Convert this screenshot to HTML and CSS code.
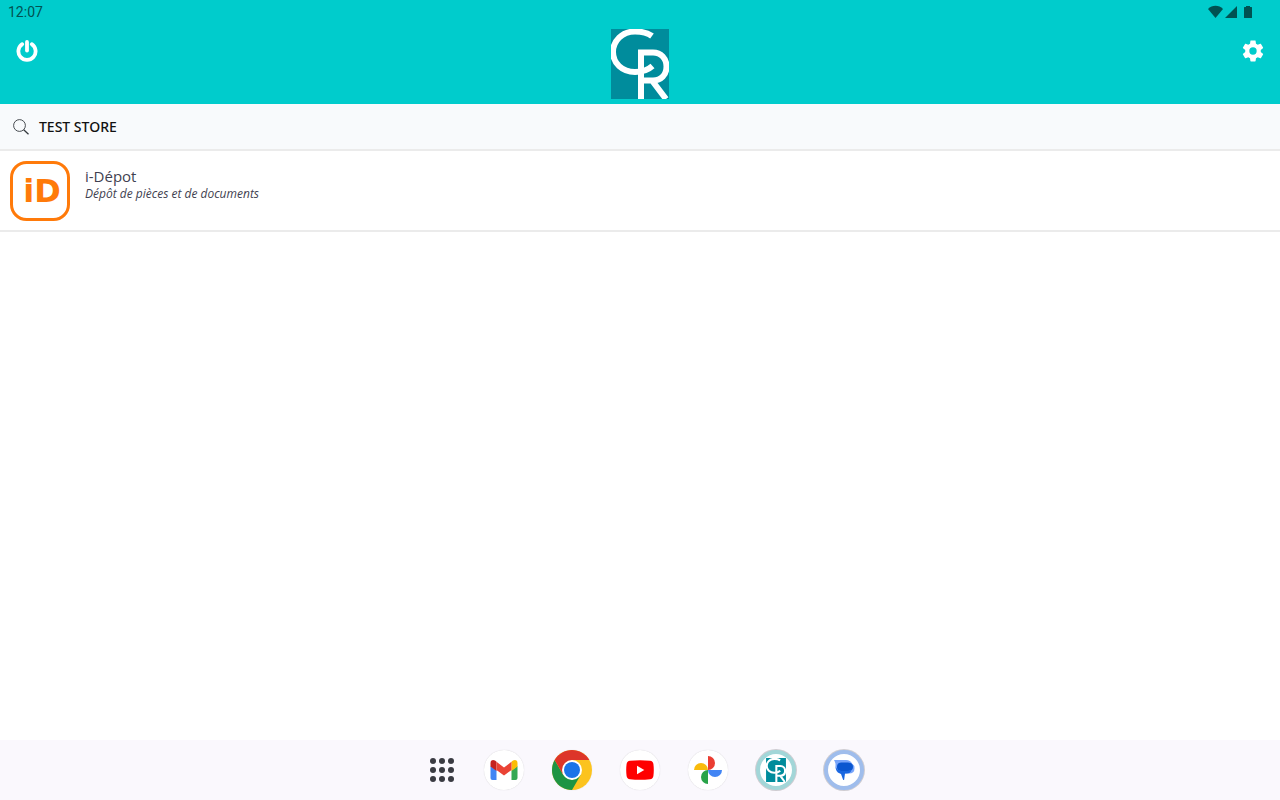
FILE: index.html
```
<!DOCTYPE html>
<html lang="fr">
<head>
  <meta charset="UTF-8">
  <meta name="viewport" content="width=device-width, initial-scale=1.0">
  <title>Test Store</title>
  <link rel="stylesheet" href="styles.css">
</head>
<body>

  <!-- logo used in the header and in the dock -->
  <svg class="defs" width="0" height="0" aria-hidden="true">
    <symbol id="logo-cr" viewBox="0 0 58 70">
      <rect class="logo-bg" width="58" height="70"/>
      <g class="logo-lines">
        <path d="M41 7C37 4 31 2.500 24 2.500C11 2.500 2 12 2 23C2 34 11 43 24 43C31 43 37 41 41.500 37"/>
        <path d="M30 70V23.500H42C50 23.500 55.500 29.500 55.500 37.500C55.500 46 50 51.500 42 51.500H31M41 51.500L55 70"/>
      </g>
    </symbol>
  </svg>

  <header class="header">
    <div class="status">
      <time>12:07</time>
      <svg width="46" height="14" viewBox="0 0 46 14" fill="#005252" aria-hidden="true">
        <path d="M0 4C4-.300 11-.300 15 4L7.500 13Z"/>
        <path d="M29 1V13H17Z"/>
        <path d="M38 1h4v1h1.500q.5 0 .5.500V12.500q0 .5-.5.500h-7q-.5 0-.5-.500V2.500q0-.5.500-.500H38z"/>
      </svg>
    </div>
    <div class="toolbar">
      <button type="button" class="icon-btn" aria-label="Déconnexion">
        <svg width="22" height="22" viewBox="0 0 22 22" fill="none" stroke="#fff" stroke-width="3.800">
          <path d="M6.200 4.200A8.600 8.600 0 1 0 15.800 4.200" stroke-linecap="round"/>
          <path d="M11 2V10.500" stroke-linecap="round"/>
        </svg>
      </button>
      <svg class="logo" width="58" height="70" role="img" aria-label="CR"><use href="#logo-cr"/></svg>
      <button type="button" class="icon-btn" aria-label="Paramètres">
        <svg width="26" height="26" viewBox="0 0 24 24" fill="#fff">
          <path d="M19.140 12.940c.040-.300.060-.610.060-.940 0-.320-.020-.640-.070-.940l2.030-1.580c.180-.140.230-.410.120-.610l-1.920-3.320c-.120-.220-.370-.290-.590-.220l-2.390.960c-.500-.380-1.030-.700-1.620-.940l-.360-2.540c-.040-.240-.240-.410-.480-.410h-3.840c-.240 0-.430.170-.470.410l-.360 2.540c-.590.240-1.130.570-1.620.940l-2.390-.960c-.220-.080-.470 0-.590.220L2.740 8.870c-.120.210-.080.470.120.610l2.030 1.580c-.050.300-.090.630-.090.940s.020.640.070.940l-2.030 1.580c-.180.140-.230.410-.120.610l1.920 3.320c.120.220.370.290.590.220l2.390-.960c.500.380 1.030.700 1.620.940l.360 2.540c.050.240.240.410.480.410h3.840c.240 0 .440-.170.470-.410l.360-2.540c.590-.240 1.130-.560 1.620-.940l2.390.960c.220.080.470 0 .590-.220l1.920-3.320c.120-.220.070-.470-.120-.610l-2.010-1.580zM12 15.400a3.400 3.400 0 1 1 0-6.800 3.400 3.400 0 0 1 0 6.800z"/>
        </svg>
      </button>
    </div>
  </header>

  <main class="content">
    <button type="button" class="store">
      <svg width="16" height="16" viewBox="0 0 16 16" fill="none" stroke="#33383d">
        <circle cx="6.500" cy="6.500" r="5.900" stroke-width=".9"/>
        <path d="M10.700 10.700L15.500 15.300" stroke-width="1.300"/>
      </svg>
      TEST STORE
    </button>

    <ul class="apps">
      <li>
        <a href="#" class="app">
          <svg class="app-icon" width="60" height="60" viewBox="0 0 60 60" aria-hidden="true">
            <rect x="1.500" y="1.500" width="57" height="57" rx="15" fill="#fff" stroke="#ff7a0a" stroke-width="3"/>
            <text x="32" y="41" text-anchor="middle">iD</text>
          </svg>
          <span class="app-text">
            <span class="app-name">i-Dépot</span>
            <em class="app-desc">Dépôt de pièces et de documents</em>
          </span>
        </a>
      </li>
    </ul>
  </main>

  <nav class="dock">
    <button type="button" class="dock-all" aria-label="Toutes les applications">
      <svg width="24" height="24" viewBox="0 0 24 24" fill="#3a3b42">
        <circle cx="3" cy="3" r="3"/><circle cx="12" cy="3" r="3"/><circle cx="21" cy="3" r="3"/>
        <circle cx="3" cy="12" r="3"/><circle cx="12" cy="12" r="3"/><circle cx="21" cy="12" r="3"/>
        <circle cx="3" cy="21" r="3"/><circle cx="12" cy="21" r="3"/><circle cx="21" cy="21" r="3"/>
      </svg>
    </button>
    <button type="button" class="dock-btn" aria-label="Gmail">
      <svg width="28" height="22" viewBox="0 0 28 22">
        <path fill="#4285f4" d="M.500 7l6 4.500V21H2.500q-2 0-2-2z"/>
        <path fill="#34a853" d="M27.500 7l-6 4.500V21h4q2 0 2-2z"/>
        <path fill="#fbbc04" d="M21.500 2.800l1.500-1.200Q25 .400 26.500 1.500q1 .8 1 2.500v3.500l-6 4.500z"/>
        <path fill="#c5221f" d="M6.500 2.800L5 1.600Q3 .400 1.500 1.500.500 2.300.500 4v3.500l6 4.500z"/>
        <path fill="#ea4335" d="M6.500 2.800L14 8.500l7.500-5.700V11L14 16.500 6.500 11z"/>
      </svg>
    </button>
    <button type="button" class="dock-btn" aria-label="Chrome">
      <svg width="40" height="40" viewBox="0 0 40 40">
        <circle cx="20" cy="20" r="20" fill="#fcc31e"/>
        <path fill="#1e9443" d="M20 40A20 20 0 0 1 2.680 10L11.340 25 20 30l8.660-5z"/>
        <path fill="#dd3529" d="M2.680 10A20 20 0 0 1 37.320 10H20L11.340 25z"/>
        <circle cx="20" cy="20" r="10" fill="#fff"/>
        <circle cx="20" cy="20" r="8" fill="#1a73e8"/>
      </svg>
    </button>
    <button type="button" class="dock-btn" aria-label="YouTube">
      <svg width="28" height="20" viewBox="0 0 28 20">
        <path fill="#f00" d="M4 .800Q14-.300 24 .800q3 .3 3.400 3.200.8 6 0 12-.4 2.900-3.400 3.200-10 1.100-20 0-3-.3-3.400-3.200-.8-6 0-12Q1 1.100 4 .800z"/>
        <path fill="#fff" d="M11 5.800v8.400l7.300-4.200z"/>
      </svg>
    </button>
    <button type="button" class="dock-btn" aria-label="Photos">
      <svg width="28" height="28" viewBox="0 0 28 28">
        <path fill="#ea3d32" d="M14 0a7 7 0 0 1 0 14z"/>
        <path fill="#4285f4" d="M28 14a7 7 0 0 1-14 0z"/>
        <path fill="#28a349" d="M14 28a7 7 0 0 1 0-14z"/>
        <path fill="#f9bb0c" d="M0 14a7 7 0 0 1 14 0z"/>
      </svg>
    </button>
    <button type="button" class="dock-btn recent recent-cr" aria-label="CR">
      <svg width="20" height="24"><use href="#logo-cr"/></svg>
    </button>
    <button type="button" class="dock-btn recent recent-messages" aria-label="Messages">
      <svg width="22" height="22" viewBox="0 0 22 22">
        <path fill="#78a5fa" d="M1 1H13Q17.500 1 19 4.500Q21.500 6 21.500 9.500Q21.500 14.500 16 14.500H8Q2.500 14 2.500 7.500V5Q2.500 3.500 1 1z"/>
        <path fill="#0b57d0" d="M8 3.500H15Q20 3.500 20 8Q20 12 15 12H8Q4 12 4 8Q4 3.500 8 3.500z"/>
        <path fill="#1967e0" d="M2.600 7Q3 11 8 12H15Q17 12 18.500 11Q17.500 14.500 13.500 14.500H12L11.200 20.500Q10.800 21.500 10 20.500L8 15Q2.500 13 2.600 7z"/>
      </svg>
    </button>
  </nav>

</body>
</html>
```

FILE: styles.css
```
* {
  box-sizing: border-box;
}
body {
  margin: 0;
  min-height: 100vh;
  display: flex;
  flex-direction: column;
  font-family: "Open Sans", sans-serif;
  background-color: #fff;
}
button {
  padding: 0;
  border: none;
  background: none;
  font: inherit;
  color: inherit;
  cursor: pointer;
}
svg {
  display: block;
}
.defs {
  position: absolute;
}

/* header */
.header {
  background-color: #00cccc;
  padding-bottom: 5px;
}
.status {
  display: flex;
  justify-content: space-between;
  align-items: center;
  height: 24px;
  padding: 0 26px 0 8px;
  font-family: Roboto, sans-serif;
  font-size: 14px;
  color: #005252;
}
.toolbar {
  display: flex;
  justify-content: space-between;
  align-items: flex-start;
  padding: 5px 14px 0;
}
.icon-btn {
  display: flex;
  align-items: center;
  justify-content: center;
  width: 26px;
  height: 44px;
}
.logo-bg {
  fill: #008c9c;
}
.logo-lines {
  fill: none;
  stroke: #fff;
  stroke-width: 6;
}

/* store */
.content {
  flex: 1;
}
.store {
  display: flex;
  align-items: center;
  gap: 10px;
  width: 100%;
  height: 47px;
  padding: 0 13px;
  border-bottom: 2px solid #ebebeb;
  background-color: #f8fafc;
  font-family: "Noto Sans", sans-serif;
  font-size: 14px;
  font-weight: 500;
  color: #111;
}
.apps {
  list-style: none;
  margin: 0;
  padding: 0;
}
.app {
  display: flex;
  gap: 15px;
  padding: 10px 10px 9px;
  border-bottom: 2px solid #ebebeb;
  color: #3f3f50;
  text-decoration: none;
}
.app-icon text {
  font-family: "DejaVu Sans", sans-serif;
  font-size: 32px;
  font-weight: 700;
  fill: #ff7a0a;
}
.app-text {
  display: flex;
  flex-direction: column;
  padding-top: 5px;
}
.app-name {
  font-size: 15px;
  line-height: 20px;
}
.app-desc {
  font-size: 12px;
  line-height: 16px;
}

/* dock */
.dock {
  display: flex;
  justify-content: center;
  align-items: center;
  gap: 28px;
  height: 60px;
  padding-left: 12px;
  background-color: #faf8fd;
}
.dock-all {
  display: flex;
  justify-content: center;
  width: 28px;
}
.dock-btn {
  display: flex;
  align-items: center;
  justify-content: center;
  width: 40px;
  height: 40px;
  border-radius: 50%;
  background-color: #fff;
  box-shadow: 0 0 1px rgba(0, 0, 0, 0.2);
}
.recent {
  border: 4px solid #a2d6d8;
  box-shadow: 0 0 0 1px #cfcdd2;
}
.recent-messages {
  border-color: #9fbdec;
}
```
